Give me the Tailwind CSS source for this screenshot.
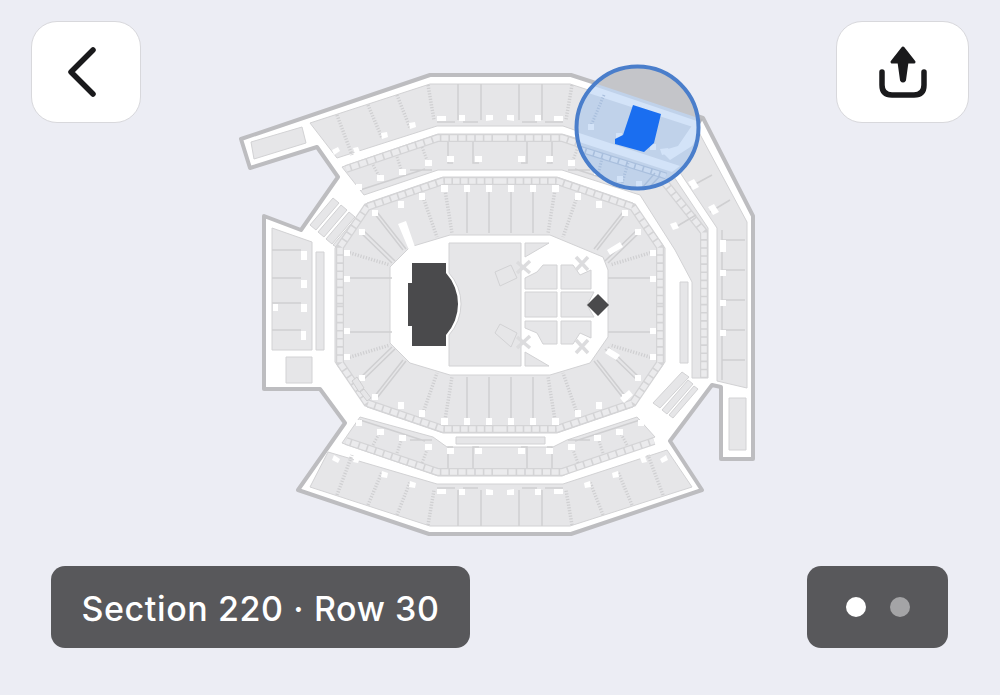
<!DOCTYPE html>
<html lang="en">
<head>
    <meta charset="UTF-8">
    <meta name="viewport" content="width=device-width, initial-scale=1.0">
    <script src="https://cdn.jsdelivr.net/npm/@tailwindcss/browser@4"></script>
    <title>Seat view</title>
</head>
<body class="bg-[#ecedf4]">
    <div class="relative flex flex-col justify-between w-[1000px] h-[695px] pt-[21px] pb-[47px] overflow-hidden font-['Inter','Liberation_Sans',sans-serif]">

        <!-- stadium map -->
        <svg class="absolute inset-0 blur-[0.4px]" width="1000" height="695" viewBox="0 0 1000 695" fill="none">
            <defs>
                <clipPath id="lens"><circle cx="637.5" cy="127.5" r="61"/></clipPath>

                <!-- upper left quarter, mirrored for the other three -->
                <g id="quarter">
                    <!-- outer tier -->
                    <g class="stroke-[#cfcfd1]" stroke-width="3.5" stroke-dasharray="1.2 1.6">
                        <path d="M337 115L352 155M368 105L382 138M397 95L410 128M428 85L434 120"/>
                    </g>
                    <path class="stroke-[#cfcfd1]" stroke-width="1.5" d="M458 84V120M481 84V120M437 122H455M463 122H478"/>
                    <path class="fill-white" d="M437 116h9v5h-9zM459 115h6v6h-6zM486 115h7v5l-7 1zM353 148l5-1 2 5-5 2zM381 133l6-1 1 5-6 2zM409 123l6-1 1 5-6 2zM332 150l6-3 2 4-6 4z"/>

                    <!-- club tier -->
                    <path class="stroke-[#d4d4d6]" stroke-width="8" d="M500 138H438L346 169"/>
                    <path class="stroke-[#ebebed]" stroke-width="5.5" stroke-dasharray="7 1.6" d="M500 138H438L346 169"/>
                    <g class="stroke-[#cfcfd1]" stroke-width="3" stroke-dasharray="1.2 1.6">
                        <path d="M422 147L428 163M397 157L402 172M373 165L380 178"/>
                    </g>
                    <path class="stroke-[#cfcfd1]" stroke-width="1.5" d="M448 142V163H453M473 142V163H479M360 190L425 169M410 170H432"/>
                    <path class="fill-white" d="M447 156h7v6h-7zM475 156h7v6h-7zM425 160h7v6h-7zM399 169h7v6h-7zM377 175h7v6h-7zM356 184h6v6h-6z"/>

                    <!-- lower tier -->
                    <path class="stroke-[#d4d4d6]" stroke-width="8" d="M500 181H443L367 207L340 247V305"/>
                    <path class="stroke-[#ebebed]" stroke-width="5.5" stroke-dasharray="6.5 1.6" d="M500 181H443L367 207L340 247V305"/>
                    <g class="stroke-[#cfcfd1]" stroke-width="3.5" stroke-dasharray="1.2 1.6">
                        <path d="M445 190L452 233M423 197L437 237M347 252L390 265"/>
                    </g>
                    <path class="stroke-[#cfcfd1]" stroke-width="1.5" d="M467 190V233M489 190V233M374 213L403 250M377 212L406 249M360 232L392 263M363 230L395 261M344 278H392"/>
                    <path class="fill-white" d="M441 185h7v7h-7zM464 185h6v7h-6zM486 185h6v7h-6zM419 193h6v7h-6zM398 201h6v7h-6zM372 210h6v6h-6zM359 229h6v6h-6zM344 250h6v6h-6zM344 276h6v6h-6z"/>
                </g>
            </defs>

            <!-- outline -->
            <path class="fill-white stroke-[#bdbdc0]" stroke-width="4" stroke-linejoin="round" d="M241 139L430 75H571L703 118L753 216V459H721V387L712 385L670 441L702 490L571 534H429L298 490L345 423L320 389H264V216L301 230L338 177L317 147L250 168Z"/>

            <g class="fill-[#e6e6e8] stroke-[#d2d2d4]" stroke-width="1">
                <!-- left wing and left stand -->
                <path d="M251 142L302 127L306 143L254 159Z"/>
                <path d="M272 228L312 242V350H272Z"/>
                <path d="M316 252H324V350H316Z"/>
                <path d="M286 357H312V383H286Z"/>
                <path d="M310 225L333 198L339 203L316 230ZM318 232L341 205L347 210L324 237ZM326 239L349 212L355 217L332 244ZM333 245L356 218L362 222L338 248Z"/>

                <!-- right stand -->
                <path d="M729 398H746V450H729Z"/>
                <path d="M680 282H688V363H680Z"/>
                <path d="M653 403L682 372L689 377L660 408ZM662 410L688 380L693 384L667 414ZM669 415L694 386L698 389L673 418Z"/>

                <!-- outer tier -->
                <path d="M310 123L430 84H570L695 125L747 222V388L717 381V228L675 165L563 126H437L337 158Z"/>
                <path d="M310 487L430 526H570L692 487L667 450L563 484H437L328 452Z"/>

                <!-- club tier -->
                <path d="M342 167L438 134H562L666 165L708 228V378H692V282L675 250L640 195L562 170H438L364 195Z"/>
                <path d="M342 443L360 417L433 437L447 447H553L567 440L637 417L655 437L562 476H438Z"/>
                <path d="M456 437H545V444H456Z"/>

                <!-- lower tier -->
                <path fill-rule="evenodd" d="M443 177H557L633 203L665 248V362L633 407L557 433H443L367 407L335 362V248L367 203ZM450 235L410 247L390 267V343L410 363L450 375H550L590 363L608 337V270L603 257L550 235Z"/>
            </g>

            <use href="#quarter"/>
            <use href="#quarter" transform="translate(1000 0) scale(-1 1)"/>
            <use href="#quarter" transform="translate(0 610) scale(1 -1)"/>
            <use href="#quarter" transform="translate(1000 610) scale(-1 -1)"/>

            <!-- aisle stubs around the field -->
            <path class="fill-white" d="M398 224l8-3 9 26-6 3zM607 250l13-8 3 5-13 8zM605 353l4-5 11 7-4 5zM620 398l9-8 4 5-9 8z"/>
            <path class="fill-[#e6e6e8] stroke-[#cfcfd1]" stroke-width="1" d="M352 381l5-4 7 11-5 4zM360 392l4-3 7 9-4 3z"/>

            <!-- right stand detail -->
            <path class="stroke-[#d4d4d6]" stroke-width="8" d="M654 169L704 232V378"/>
            <path class="stroke-[#ebebed]" stroke-width="5.5" stroke-dasharray="6.5 1.6" d="M654 169L704 232V378"/>
            <path class="stroke-[#cfcfd1]" stroke-width="1.5" d="M722 230V380M722 240H745M722 270H745M722 300H745M722 330H745M722 360H745M690 187L712 175M710 212L730 200M674 228L696 215"/>
            <path class="fill-white" d="M688 182l6-3 5 8-6 3zM708 207l6-3 5 8-6 3zM670 224l6-2 3 6-6 2zM720 240h6v12h-6zM720 270h6v6h-6zM720 300h6v6h-6zM720 330h6v6h-6z"/>

            <!-- left stand detail -->
            <path class="stroke-[#cfcfd1]" stroke-width="1.5" d="M272 250H301M272 278H301M272 303H301M272 330H301"/>
            <path class="fill-white" d="M301 251h6v9h-6zM301 280h6v8h-6zM301 304h6v8h-6zM301 331h5v9h-5zM273 304h5v7h-5z"/>

            <!-- floor -->
            <g class="fill-[#e6e6e8] stroke-[#d2d2d4]" stroke-width="1">
                <path d="M449 243H521V366H449V335A46 46 0 0 0 449 273Z"/>
                <path d="M525 243H549L525 257ZM525 352L549 366H525Z"/>
                <path d="M525 278L537 272L543 265H557V289H525ZM561 265H573L580 275L591 270V289H561Z"/>
                <path d="M525 292H557V317H525ZM561 292H594L587 305L594 317H561Z"/>
                <path d="M525 321H557V344H543L537 333L525 328ZM561 321H591V338L580 333L573 344H561Z"/>
                <path d="M495 272L511 265L517 278L500 286ZM495 333L500 324L517 333L511 347Z"/>
            </g>
            <path class="stroke-[#dcdcde]" stroke-width="3.5" d="M517 262L530 273M530 261L517 273M576 257L588 270M588 257L576 270M517 337L530 348M530 336L517 348M576 340L588 353M588 340L576 353"/>
            <path class="fill-[#4a4a4c]" d="M412 263H446V273A46 46 0 0 1 446 335V346H412V326H408V283H412Z"/>
            <path class="fill-[#4a4a4c]" d="M598 294L609 305L598 316L587 305Z"/>

            <!-- magnified lens -->
            <g clip-path="url(#lens)">
                <rect x="570" y="60" width="140" height="140" class="fill-[#c0d2ea]"/>
                <path class="fill-[#c4c5c9]" d="M570 60H710V122L597 84L570 76Z"/>
                <path class="fill-[#d3e3f8]" d="M570 78L700 122L696 128L570 87Z"/>
                <path class="fill-[#d3e3f8]" d="M570 130L680 166L672 172L570 139Z"/>
                <path class="fill-[#d3e3f8]" d="M693 124L702 130L692 146L670 160L661 151L678 146Z"/>
                <path class="stroke-[#a9bfdd]" stroke-width="7" d="M570 146L666 176"/>
                <path class="stroke-[#c8d9f0]" stroke-width="4.5" stroke-dasharray="7 1.6" d="M570 146L666 176"/>
                <g class="stroke-[#a9bfdd]" stroke-width="3" stroke-dasharray="1.2 1.6">
                    <path d="M604 95L590 128M602 158L596 184M628 163L620 190"/>
                </g>
                <path class="stroke-[#a9bfdd]" stroke-width="1.5" d="M655 173L636 195M660 176L642 195"/>
                <path class="fill-[#d3e3f8]" d="M588 124h6v6h-6zM616 133h6v6h-6zM650 144h6v6h-6zM660 149l8-1 2 5-8 2zM617 176h6v6h-6zM636 181h6v6h-6z"/>
                <path class="fill-[#1a6ef0]" d="M633 105L661 114L654 143L644 152L615 144V139L623 135Z"/>
            </g>
            <path class="fill-[#b5b6ba]" d="M697 118L703 119L699 126Z"/>
            <circle cx="637.5" cy="127.5" r="61" class="stroke-[#4a7ecb]" stroke-width="4"/>
        </svg>

        <!-- top buttons -->
        <div class="relative flex justify-between pl-[31px] pr-[31px]">
            <button class="flex items-center justify-center w-[110px] h-[102px] bg-white rounded-[26px] border border-[#d8d8dc]">
                <svg class="mr-[8px]" width="30" height="50" viewBox="0 0 30 50" fill="none"><path d="M26 3L4 25L26 47" class="stroke-[#1a1a1c]" stroke-width="5.5" stroke-linecap="round" stroke-linejoin="round"/></svg>
            </button>
            <button class="flex items-center justify-center w-[133px] h-[102px] bg-white rounded-[26px] border border-[#d8d8dc]">
                <svg width="50" height="54" viewBox="0 0 50 54" fill="none">
                    <path class="fill-[#1a1a1c] stroke-[#1a1a1c]" stroke-width="3" stroke-linejoin="round" d="M25 3L14 17H21L23.5 35Q25 37 26.5 35L29 17H36Z"/>
                    <path class="stroke-[#1a1a1c]" stroke-width="5.5" stroke-linecap="round" d="M4 27V40Q4 50 14 50H36Q46 50 46 40V27"/>
                </svg>
            </button>
        </div>

        <!-- bottom labels -->
        <div class="relative flex justify-between pl-[51px] pr-[52px]">
            <div class="flex items-center justify-center w-[419px] h-[82px] pt-[2px] bg-[#58585b] rounded-[14px]">
                <span class="text-white text-[34px] font-medium tracking-[0.6px]">Section 220 · Row 30</span>
            </div>
            <div class="flex items-center justify-center gap-[24px] w-[141px] h-[82px] bg-[#58585b] rounded-[14px]">
                <span class="w-[20px] h-[20px] rounded-full bg-white"></span>
                <span class="w-[20px] h-[20px] rounded-full bg-[#a4a4a6]"></span>
            </div>
        </div>
    </div>
</body>
</html>
